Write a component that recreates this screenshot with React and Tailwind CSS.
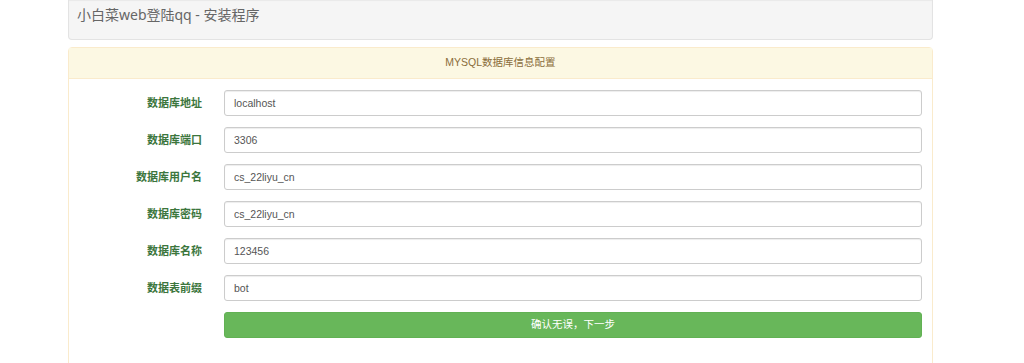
import React from 'react';

const fields = [
  { label: '数据库地址', value: 'localhost' },
  { label: '数据库端口', value: '3306' },
  { label: '数据库用户名', value: 'cs_22liyu_cn' },
  { label: '数据库密码', value: 'cs_22liyu_cn' },
  { label: '数据库名称', value: '123456' },
  { label: '数据表前缀', value: 'bot' },
];

const cjk = "font-['Liberation_Sans','Noto_Sans_CJK_SC',sans-serif]";

export default function App() {
  return (
    <div className="bg-white min-h-[363px] overflow-hidden">
      <div className="ml-[68px] w-[865px]">
        <div className="h-[40px] bg-[#f5f5f5] border-x border-b border-[#e3e3e3] rounded-b-[4px] pl-[8px] pt-[2px] shadow-[inset_0_1px_1px_rgba(0,0,0,0.05)]">
          <span className="text-[14px] text-[#666] font-['Noto_Sans','Noto_Sans_CJK_SC',sans-serif]">
            小白菜web登陆qq - 安装程序
          </span>
        </div>

        <div className="mt-[7px] border border-[#faebcc] rounded-t-[4px]">
          <div className={`h-[31px] bg-[#fcf8e3] border-b border-[#faebcc] flex items-center justify-center text-[10.5px] text-[#8a6d3b] ${cjk}`}>
            MYSQL数据库信息配置
          </div>
          <div className="pt-[11px] pr-[10px] pb-[30px] flex flex-col gap-[11px]">
            {fields.map((f) => (
              <div key={f.label} className="flex items-center">
                <label className={`w-[133px] text-right text-[11px] font-bold text-[#3c763d] ${cjk}`}>
                  {f.label}
                </label>
                <input
                  readOnly
                  value={f.value}
                  className={`ml-[22px] flex-1 h-[26px] border border-[#ccc] rounded-[3px] px-[9px] text-[10.5px] text-[#555] outline-none shadow-[inset_0_1px_1px_rgba(0,0,0,0.075)] ${cjk}`}
                />
              </div>
            ))}
            <div className="flex">
              <button
                type="button"
                className={`ml-[155px] flex-1 h-[26px] rounded-[3px] bg-[#68b75a] border border-[#62b154] text-white text-[10.5px] ${cjk}`}
              >
                确认无误，下一步
              </button>
            </div>
          </div>
        </div>
      </div>
    </div>
  );
}
